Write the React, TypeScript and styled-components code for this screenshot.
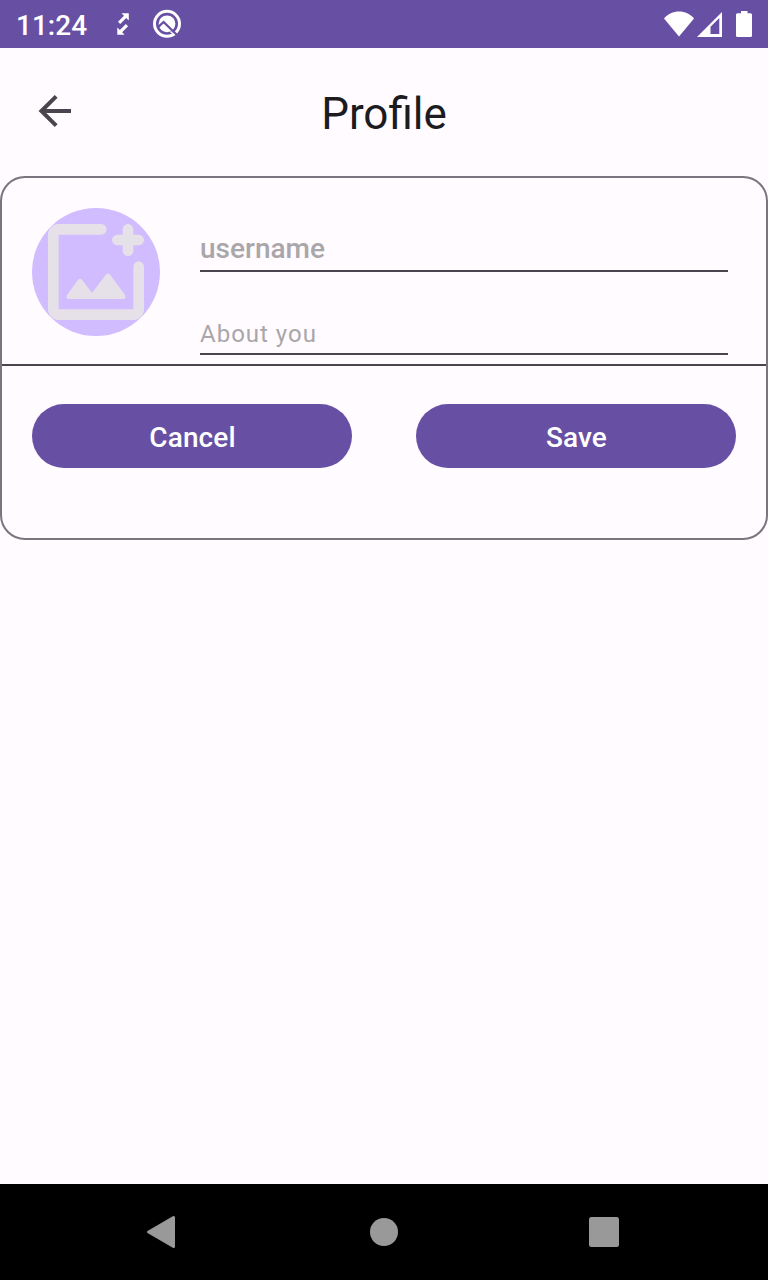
import React from "react";
import styled, { createGlobalStyle } from "styled-components";

const GlobalStyle = createGlobalStyle`
  *, *::before, *::after { box-sizing: border-box; }
  body { margin: 0; background: #fffbff; font-family: Roboto, "Liberation Sans", sans-serif; }
`;

const Screen = styled.div`
  display: flex;
  flex-direction: column;
  width: 768px;
  height: 1280px;
  background: #fffbff;
`;

const StatusBar = styled.header`
  display: flex;
  align-items: center;
  height: 48px;
  padding: 0 16px;
  background: #6750a3;
  color: #fff;
`;

const Clock = styled.span`
  width: 98px;
  font-size: 28px;
  font-weight: 500;
  line-height: 48px;
  padding-top: 3px;
  white-space: nowrap;
`;

const StatusIcon = styled.svg<{ $w: number; $gap?: number }>`
  display: block;
  flex: none;
  width: ${(p) => p.$w}px;
  height: 48px;
  margin-left: ${(p) => p.$gap ?? 0}px;
  fill: currentColor;
`;

const StatusRight = styled.div`
  display: flex;
  margin-left: auto;
`;

const TitleBar = styled.div`
  display: grid;
  grid-template-columns: 96px 1fr 96px;
  align-items: center;
  height: 128px;
`;

const BackButton = styled.button`
  display: block;
  width: 48px;
  height: 48px;
  margin: 0 0 2px 31px;
  padding: 0;
  border: 0;
  background: none;
  color: #49454f;
`;

const Title = styled.h1`
  margin: 3px 0 0;
  font-size: 44px;
  font-weight: 400;
  line-height: 56px;
  text-align: center;
  color: #1c1b1f;
`;

const Card = styled.main`
  height: 364px;
  border: 2px solid #79747e;
  border-radius: 25px;
`;

const ProfileRow = styled.section`
  display: flex;
  height: 188px;
  padding: 30px 38px 0 30px;
  border-bottom: 2px solid #49454f;
`;

const Avatar = styled.div`
  flex: none;
  width: 128px;
  height: 128px;
  margin-right: 40px;
  border-radius: 50%;
  background: #d0bcff;
  color: #e6e0e9;
`;

const Fields = styled.div`
  flex: 1;
`;

const Field = styled.input<{ $size: number; $weight: number; $height: number; $spacing: number; $pad: number }>`
  display: block;
  width: 100%;
  height: ${(p) => p.$height}px;
  padding: ${(p) => p.$pad}px 0 0;
  border: 0;
  border-bottom: 2px solid #49454f;
  border-radius: 0;
  outline: 0;
  background: none;
  font-family: inherit;
  font-size: ${(p) => p.$size}px;
  font-weight: ${(p) => p.$weight};
  letter-spacing: ${(p) => p.$spacing}px;
  &::placeholder { color: #a9a7aa; opacity: 1; }
`;

const Actions = styled.section`
  display: grid;
  grid-template-columns: 1fr 1fr;
  gap: 64px;
  padding: 38px 30px 0;
`;

const ActionButton = styled.button`
  height: 64px;
  padding: 2px 0 0 1px;
  border: 0;
  border-radius: 32px;
  background: #6750a3;
  color: #fff;
  font-family: inherit;
  font-size: 28px;
  font-weight: 500;
  letter-spacing: 0.1px;
`;

const NavBar = styled.nav`
  display: flex;
  justify-content: space-between;
  height: 96px;
  margin-top: auto;
  padding: 24px 140px;
  background: #000;
  color: #999;
`;

const NavIcon = styled.svg`
  width: 48px;
  height: 48px;
  fill: currentColor;
`;

export default function App() {
  return (
    <>
      <GlobalStyle />
      <Screen>
        <StatusBar>
          <Clock>11:24</Clock>
          <StatusIcon $w={18} viewBox="114 0 18 48">
            <path d="M121.5 13.3H128.8V20.6L126.2 18L120.2 24L118 21.8L124 15.8Z" />
            <path d="M124.6 34.7H117.3V27.4L119.9 30L125.9 24L128.1 26.2L122.1 32.2Z" />
          </StatusIcon>
          <StatusIcon $w={32} $gap={19} viewBox="151 0 32 48">
            <circle cx="167" cy="23.8" r="12.5" fill="none" stroke="currentColor" strokeWidth="3" />
            <circle cx="167" cy="23.8" r="8.4" />
            <path d="M157.5 27.6L163.6 22L178 36" fill="none" stroke="#6750a3" strokeWidth="2.3" />
            <path d="M170.5 31.5L174.5 35.2" fill="none" stroke="currentColor" strokeWidth="1.5" />
          </StatusIcon>
          <StatusRight>
            <StatusIcon $w={30} viewBox="664 0 30 48">
              <path d="M679 36.6L664 18.4C668 14 673 11.5 679 11.5S690 14 694 18.4Z" />
            </StatusIcon>
            <StatusIcon $w={25} $gap={3} viewBox="697 0 25 48">
              <path fillRule="evenodd" d="M697 37L722 12V37ZM710.5 34H719.3V18L710.5 26.8Z" />
            </StatusIcon>
            <StatusIcon $w={16} $gap={14} viewBox="736 0 16 48">
              <path d="M741 11H747.5V13.3H750.5Q752 13.3 752 14.8V35.5Q752 37 750.5 37H737.5Q736 37 736 35.5V14.8Q736 13.3 737.5 13.3H741Z" />
            </StatusIcon>
          </StatusRight>
        </StatusBar>

        <TitleBar>
          <BackButton aria-label="Back">
            <svg width="48" height="48" viewBox="31 87 48 48" fill="none" stroke="currentColor" strokeWidth="4">
              <path d="M71 111H42M56.2 96.4L41.4 111L56.2 125.6" />
            </svg>
          </BackButton>
          <Title>Profile</Title>
        </TitleBar>

        <Card>
          <ProfileRow>
            <Avatar>
              <svg width="128" height="128" viewBox="0 0 24 24" fill="currentColor">
                <path d="M5 3H13A1 1 0 0 1 13 5H5V19H19V11A1 1 0 0 1 21 11V19A2 2 0 0 1 19 21H5A2 2 0 0 1 3 19V5A2 2 0 0 1 5 3Z" />
                <path d="M17 4A1 1 0 0 1 19 4V5H20A1 1 0 0 1 20 7H19V8A1 1 0 0 1 17 8V7H16A1 1 0 0 1 16 5H17Z" />
                <path d="M6.6 16.25L8.6 13.5Q9 13.02 9.4 13.5L11.25 15.95L13.85 12.53Q14.25 12.04 14.65 12.53L17.4 16.2Q17.8 17 17 17.05H7Q6.2 17 6.6 16.25Z" />
              </svg>
            </Avatar>
            <Fields>
              <Field $size={28} $weight={500} $height={64} $spacing={0} $pad={18} placeholder="username" />
              <Field $size={24} $weight={400} $height={83} $spacing={1} $pad={42} placeholder="About you" />
            </Fields>
          </ProfileRow>
          <Actions>
            <ActionButton>Cancel</ActionButton>
            <ActionButton>Save</ActionButton>
          </Actions>
        </Card>

        <NavBar>
          <NavIcon viewBox="140 1208 48 48">
            <path d="M147.5 1231L172.8 1216.2Q175 1215.3 175 1217.5V1246.5Q175 1248.7 172.8 1247.8L147.5 1233Q146.3 1232 147.5 1231Z" />
          </NavIcon>
          <NavIcon viewBox="0 0 48 48">
            <circle cx="24" cy="24" r="14" />
          </NavIcon>
          <NavIcon viewBox="580 1208 48 48">
            <rect x="589" y="1217" width="30" height="30" rx="2.5" />
          </NavIcon>
        </NavBar>
      </Screen>
    </>
  );
}
